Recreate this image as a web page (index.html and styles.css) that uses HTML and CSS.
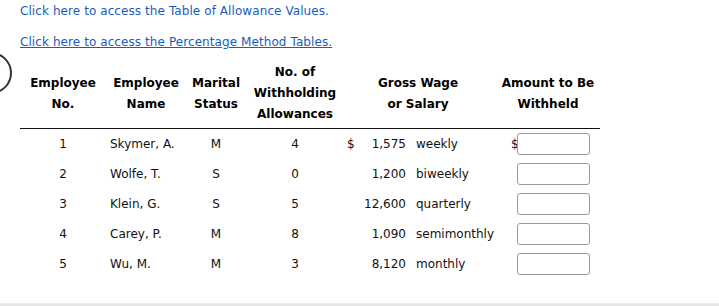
FILE: index.html
```html
<!DOCTYPE html>
<html>
<head>
<meta charset="utf-8">
<link rel="stylesheet" href="styles.css">
</head>
<body>
<div class="page">
  <div class="ring"></div>
  <div class="links">
    <a class="link plain" href="#">Click here to access the Table of Allowance Values.</a>
    <a class="link under" href="#">Click here to access the Percentage Method Tables.</a>
  </div>
  <table class="wage">
    <colgroup>
      <col class="c1"><col class="c2"><col class="c3"><col class="c4">
      <col class="c5a"><col class="c5b"><col class="c5c"><col class="c6">
    </colgroup>
    <thead>
      <tr>
        <th>Employee<br>No.</th>
        <th>Employee<br>Name</th>
        <th>Marital<br>Status</th>
        <th>No. of<br>Withholding<br>Allowances</th>
        <th colspan="3">Gross Wage<br>or Salary</th>
        <th class="amt-head">Amount to Be<br>Withheld</th>
      </tr>
    </thead>
    <tbody>
      <tr>
        <td class="ctr">1</td><td class="name">Skymer, A.</td><td class="ctr">M</td><td class="ctr">4</td>
        <td class="dol">$</td><td class="amt">1,575</td><td class="freq">weekly</td>
        <td class="ans"><span class="cur">$</span><input class="box" type="text"></td>
      </tr>
      <tr>
        <td class="ctr">2</td><td class="name">Wolfe, T.</td><td class="ctr">S</td><td class="ctr">0</td>
        <td class="dol"></td><td class="amt">1,200</td><td class="freq">biweekly</td>
        <td class="ans"><span class="cur"></span><input class="box" type="text"></td>
      </tr>
      <tr>
        <td class="ctr">3</td><td class="name">Klein, G.</td><td class="ctr">S</td><td class="ctr">5</td>
        <td class="dol"></td><td class="amt">12,600</td><td class="freq">quarterly</td>
        <td class="ans"><span class="cur"></span><input class="box" type="text"></td>
      </tr>
      <tr>
        <td class="ctr">4</td><td class="name">Carey, P.</td><td class="ctr">M</td><td class="ctr">8</td>
        <td class="dol"></td><td class="amt">1,090</td><td class="freq">semimonthly</td>
        <td class="ans"><span class="cur"></span><input class="box" type="text"></td>
      </tr>
      <tr>
        <td class="ctr">5</td><td class="name">Wu, M.</td><td class="ctr">M</td><td class="ctr">3</td>
        <td class="dol"></td><td class="amt">8,120</td><td class="freq">monthly</td>
        <td class="ans"><span class="cur"></span><input class="box" type="text"></td>
      </tr>
    </tbody>
  </table>
</div>
<div class="edge"></div>
</body>
</html>
```
FILE: styles.css
```css
html, body {
  margin: 0;
  padding: 0;
  background: #fff;
}
body {
  font-family: "DejaVu Sans", Verdana, sans-serif;
  font-size: 12px;
  color: #111;
  overflow: hidden;
}
.page {
  position: relative;
  height: 303px;
  padding-left: 20px;
  box-sizing: border-box;
}
.ring {
  position: absolute;
  left: -30px;
  top: 52px;
  width: 38px;
  height: 38px;
  border: 2.5px solid #333;
  border-radius: 50%;
}
.links {
  display: flex;
  flex-direction: column;
  gap: 16px;
  padding-top: 4px;
}
.link {
  color: #1a5cc0;
  line-height: 15px;
  letter-spacing: 0.08px;
}
.plain { text-decoration: none; }
.under { text-decoration: underline; }
.wage {
  border-collapse: collapse;
  table-layout: fixed;
  width: 580px;
  margin-top: 12px;
}
.c1 { width: 86px; }
.c2 { width: 80px; }
.c3 { width: 60px; }
.c4 { width: 98px; }
.c5a { width: 14px; }
.c5b { width: 50px; }
.c5c { width: 84px; }
.c6 { width: 108px; }
.wage th {
  font-weight: bold;
  line-height: 21px;
  text-align: center;
  vertical-align: middle;
  padding: 0 0 3px 0;
  border-bottom: 1px solid #111;
  color: #000;
}
.wage th.amt-head {
  padding-left: 4px;
}
.wage td {
  height: 30px;
  padding: 1px 0 0 0;
  box-sizing: border-box;
  vertical-align: middle;
  white-space: nowrap;
}
.ctr { text-align: center; }
.name { padding-left: 4px !important; }
.dol { padding-left: 3px !important; }
.amt { text-align: right; padding-right: 2px !important; }
.freq { padding-left: 8px !important; }
.ans {
  padding-left: 19px !important;
  padding-top: 0 !important;
}
.cur {
  display: inline-block;
  width: 6px;
  vertical-align: middle;
}
.box {
  width: 73px;
  height: 22px;
  box-sizing: border-box;
  border: 1px solid #9a9a9a;
  border-radius: 3px;
  margin: 0;
  padding: 0;
  vertical-align: middle;
  background: #fff;
}
.edge {
  height: 3px;
  background: linear-gradient(#f0f0f0, #e2e2e2);
}
```
